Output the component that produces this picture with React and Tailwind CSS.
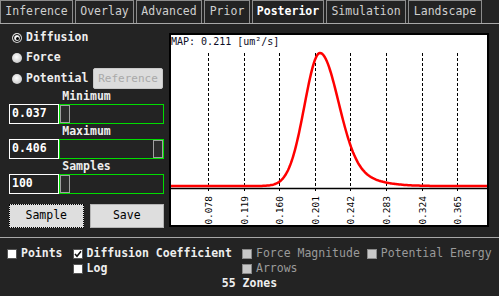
import { useState } from "react";

const tabs = [
  { name: "Inference", w: "w-[73px]" },
  { name: "Overlay", w: "w-[59px]" },
  { name: "Advanced", w: "w-[66px]" },
  { name: "Prior", w: "w-[46px]" },
  { name: "Posterior", w: "w-[72px]" },
  { name: "Simulation", w: "w-[80px]" },
  { name: "Landscape", w: "w-[74px]" },
];

const ticks = [
  { label: "0.078", x: 37 },
  { label: "0.119", x: 73 },
  { label: "0.160", x: 108 },
  { label: "0.201", x: 144 },
  { label: "0.242", x: 179 },
  { label: "0.283", x: 215 },
  { label: "0.324", x: 251 },
  { label: "0.365", x: 286 },
];

// skewed bell for the posterior curve, plot-local pixel coords
const curve = (() => {
  const pts = [];
  for (let x = -1; x <= 317; x += 1) {
    const d = x - 149;
    const f =
      d < 0
        ? Math.exp(-(d * d) / (2 * 15.5 * 15.5))
        : 0.85 * Math.exp(-(d * d) / (2 * 18 * 18)) + 0.15 * Math.exp(-(d * d) / (2 * 35 * 35));
    pts.push(`${x},${(151 - 133 * f).toFixed(1)}`);
  }
  return pts.join(" ");
})();

function Radio({ checked, label }) {
  return (
    <div className="flex items-center h-[20px]">
      <div className="ml-[3px] w-[10px] h-[10px] rounded-full bg-[radial-gradient(circle_at_45%_40%,#ffffff,#b8b8b8)] flex items-center justify-center">
        {checked && (
          <div className="w-[8px] h-[8px] rounded-full border-[1.5px] border-black flex items-center justify-center">
            <div className="w-[3px] h-[3px] rounded-full bg-black" />
          </div>
        )}
      </div>
      <span className="ml-[4px] font-bold text-[#eeeeee]">{label}</span>
    </div>
  );
}

function SliderRow({ label, value, right }) {
  return (
    <div>
      <div className="h-[14px] flex items-center justify-center font-bold text-[#eeeeee] leading-none">
        {label}
      </div>
      <div className="flex h-[20px]">
        <div className="w-[50px] border border-white flex items-center pl-[2px] font-bold text-white">
          {value}
        </div>
        <div className={`flex-1 border border-[#00dd00] flex ${right ? "justify-end" : "justify-start"}`}>
          <div className="w-[10px] border border-[#a0a0a0] bg-[#2c2c2c]" />
        </div>
      </div>
    </div>
  );
}

function Check({ checked, disabled, label }) {
  return (
    <div className="flex items-center h-[15px]">
      <div
        className={`w-[10px] h-[10px] border flex items-center justify-center ${
          disabled ? "bg-[#c8c8c8] border-[#8a8a8a]" : "bg-white border-[#555]"
        }`}
      >
        {checked && (
          <svg width="8" height="8" viewBox="0 0 8 8">
            <path d="M1 4 L3 6.2 L7 1.2" fill="none" stroke="#111" strokeWidth="1.6" />
          </svg>
        )}
      </div>
      <span className={`ml-[4px] ${disabled ? "text-[#9a9a9a]" : "font-bold text-[#eeeeee]"}`}>
        {label}
      </span>
    </div>
  );
}

export default function App() {
  const [active, setActive] = useState("Posterior");

  return (
    <div className="w-[499px] h-[296px] overflow-hidden bg-[#232323] font-['DejaVu_Sans_Mono',monospace] text-[11.5px] leading-none">
      {/* tab bar */}
      <div className="flex gap-[2px] h-[24px] border-b border-[#a8a8a8]">
        {tabs.map((t) => (
          <button
            key={t.name}
            onClick={() => setActive(t.name)}
            className={`${t.w} h-[23px] border border-b-0 border-[#8c8c8c] flex items-center justify-center ${
              active === t.name ? "text-white font-bold" : "text-[#cfcfcf]"
            }`}
          >
            {t.name}
          </button>
        ))}
      </div>

      {/* panel */}
      <div className="flex h-[214px] border-b border-[#a8a8a8]">
        <div className="ml-[9px] w-[155px] pt-[4px] flex flex-col">
          <Radio checked label="Diffusion" />
          <Radio label="Force" />
          <div className="flex items-center">
            <Radio label="Potential" />
            <div className="ml-auto mr-[1px] w-[70px] h-[21px] bg-[#dcdcdc] border border-[#c8c8c8] rounded-[2px] flex items-center justify-center text-[11px] text-[#a9a9a9]">
              Reference
            </div>
          </div>
          <div className="mt-[1px] flex flex-col gap-[1px]">
            <SliderRow label="Minimum" value="0.037" />
            <SliderRow label="Maximum" value="0.406" right />
            <SliderRow label="Samples" value="100" />
          </div>
          <div className="mt-[10px] flex gap-[6px]">
            <button className="w-[75px] h-[24px] bg-[#dedede] border border-dotted border-black text-black">
              Sample
            </button>
            <button className="w-[75px] h-[24px] bg-[#dedede] border border-[#b5b5b5] text-black">
              Save
            </button>
          </div>
        </div>

        <div className="ml-[5px] mt-[9px] w-[320px] h-[194px] border-2 border-black bg-white">
          <svg width="316" height="190" viewBox="0 0 316 190" className="block">
            <text x="0" y="9.5" fontSize="10" fill="#0d0d26" fontFamily="'DejaVu Sans Mono', monospace">
              MAP: 0.211 [um²/s]
            </text>
            {ticks.map((t) => (
              <line
                key={t.label}
                x1={t.x + 0.5}
                x2={t.x + 0.5}
                y1="18"
                y2="158"
                stroke="#000"
                strokeWidth="1"
                strokeDasharray="3 2"
              />
            ))}
            <line x1="0" x2="316" y1="153.5" y2="153.5" stroke="#000" strokeWidth="1.5" />
            <polyline points={curve} fill="none" stroke="#ff0000" strokeWidth="2.5" strokeLinejoin="round" />
            {ticks.map((t) => (
              <text
                key={t.label + "l"}
                transform={`translate(${t.x + 4}, 161) rotate(-90)`}
                textAnchor="end"
                fontSize="9.5"
                fill="#000"
                fontFamily="'DejaVu Sans Mono', monospace"
              >
                {t.label}
              </text>
            ))}
          </svg>
        </div>
      </div>

      {/* display options */}
      <div className="pt-[8px]">
        <div className="flex items-start pl-[7px]">
          <Check label="Points" />
          <div className="ml-[10px] flex flex-col">
            <Check checked label="Diffusion Coefficient" />
            <Check label="Log" />
          </div>
          <div className="ml-[10px] flex flex-col">
            <Check disabled label="Force Magnitude" />
            <Check disabled label="Arrows" />
          </div>
          <div className="ml-[7px]">
            <Check disabled label="Potential Energy" />
          </div>
        </div>
        <div className="h-[16px] flex items-center justify-center font-bold text-[#eeeeee]">55 Zones</div>
      </div>
    </div>
  );
}
